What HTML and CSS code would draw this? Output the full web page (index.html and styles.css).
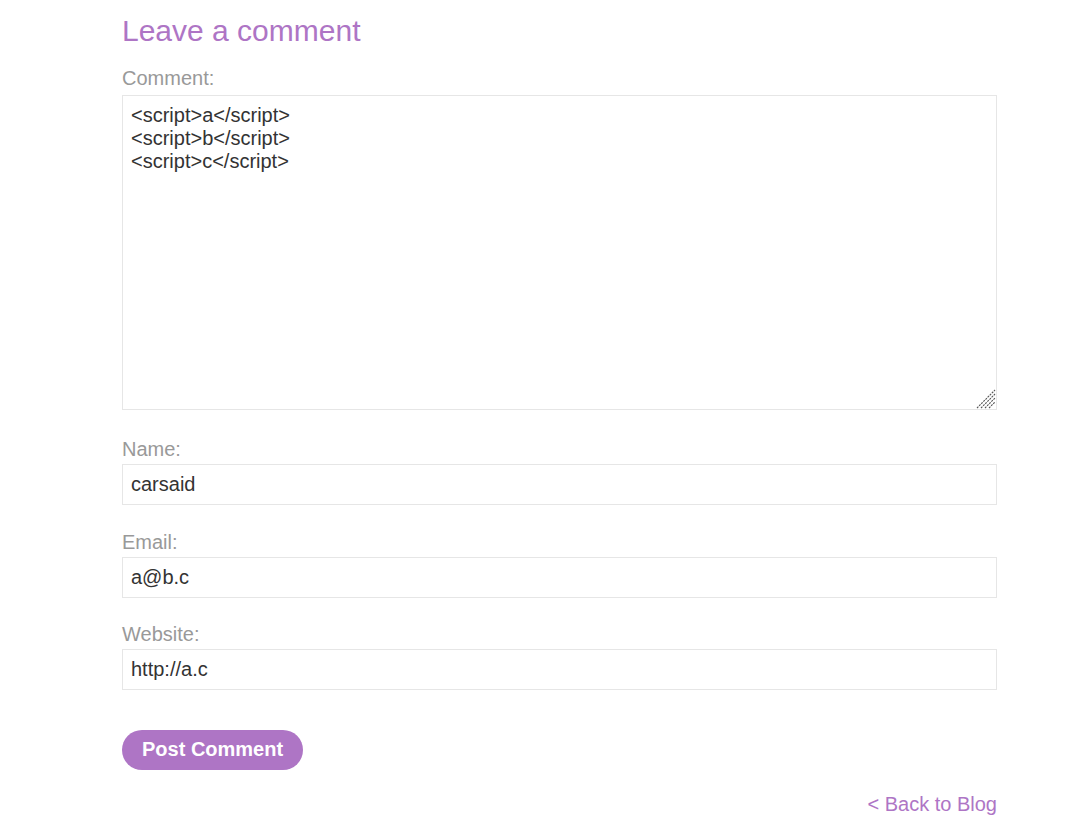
FILE: index.html
```html
<!DOCTYPE html>
<html>
<head>
<meta charset="utf-8">
<link rel="stylesheet" href="styles.css">
</head>
<body>
<section class="add-comment">
  <h2 class="title">Leave a comment</h2>
  <form class="comment-form">
    <label class="field-label label-first" for="comment">Comment:</label>
    <div class="area-wrap">
      <textarea class="field-area" id="comment" name="comment">&lt;script&gt;a&lt;/script&gt;
&lt;script&gt;b&lt;/script&gt;
&lt;script&gt;c&lt;/script&gt;</textarea>
      <svg class="grip" width="20" height="20" viewBox="0 0 20 20" aria-hidden="true">
        <line x1="1" y1="19" x2="19" y2="1"/>
        <line x1="5" y1="19" x2="19" y2="5"/>
        <line x1="9" y1="19" x2="19" y2="9"/>
        <line x1="13" y1="19" x2="19" y2="13"/>
      </svg>
    </div>
    <label class="field-label" for="name">Name:</label>
    <input class="field-input" id="name" type="text" value="carsaid">
    <label class="field-label" for="email">Email:</label>
    <input class="field-input" id="email" type="text" value="a@b.c">
    <label class="field-label" for="website">Website:</label>
    <input class="field-input" id="website" type="text" value="http://a.c">
    <button class="submit-btn" type="button">Post Comment</button>
  </form>
  <div class="back-row"><a class="back-link" href="#">&lt; Back to Blog</a></div>
</section>
</body>
</html>
```
FILE: styles.css
```css
html, body {
  margin: 0;
  padding: 0;
  background: #fff;
}
body {
  font-family: "Liberation Sans", Arial, sans-serif;
  color: #333;
}
.add-comment {
  width: 875px;
  margin-left: 122px;
  padding-top: 13px;
}
.title {
  margin: 0 0 18px 0;
  font-size: 30px;
  font-weight: normal;
  line-height: 36px;
  color: #ae75c5;
}
.comment-form {
  display: flex;
  flex-direction: column;
}
.field-label {
  font-size: 20px;
  line-height: 23px;
  color: #999;
  margin-bottom: 3px;
}
.label-first {
  margin-bottom: 5px;
}
.area-wrap {
  position: relative;
  width: 875px;
  height: 315px;
  margin-bottom: 28px;
}
.field-area,
.field-input {
  box-sizing: border-box;
  width: 875px;
  border: 1px solid #e6e6e6;
  font-family: "Liberation Sans", Arial, sans-serif;
  font-size: 20px;
  line-height: 23px;
  color: #333;
  padding: 8px 8px;
  margin: 0 0 25.5px 0;
  background: #fff;
  outline: none;
}
.field-area {
  display: block;
  height: 315px;
  margin: 0;
  resize: none;
}
.grip {
  position: absolute;
  right: 1px;
  bottom: 1px;
  stroke: #555;
  stroke-width: 1.1;
  stroke-dasharray: 2 1;
  fill: none;
}
.field-input {
  height: 41px;
}
.submit-btn {
  align-self: flex-start;
  margin-top: 14px;
  height: 40px;
  padding: 0 20px;
  border: none;
  border-radius: 20px;
  background: #ae75c5;
  color: #fff;
  font-family: "Liberation Sans", Arial, sans-serif;
  font-weight: bold;
  font-size: 20px;
  cursor: pointer;
}
.back-row {
  display: flex;
  justify-content: flex-end;
  margin-top: 23px;
}
.back-link {
  font-size: 20px;
  line-height: 23px;
  color: #ae75c5;
  text-decoration: none;
}
```
